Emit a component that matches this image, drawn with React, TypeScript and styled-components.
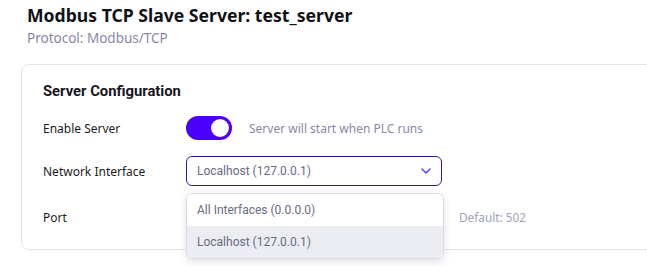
import styled, { createGlobalStyle } from "styled-components";

const GlobalStyle = createGlobalStyle`
  body {
    margin: 0;
    background: #ffffff;
    font-family: "Noto Sans", sans-serif;
  }
`;

const Page = styled.div`
  width: 647px;
  height: 266px;
  overflow: hidden;
  padding: 3px 0 0 27px;
  box-sizing: border-box;
`;

const Title = styled.h1`
  margin: 0;
  font-size: 17.6px;
  font-weight: 700;
  color: #111118;
  line-height: 24px;
`;

const Subtitle = styled.div`
  margin-top: 2px;
  font-size: 13.5px;
  color: #8a87a8;
  line-height: 18px;
`;

const Card = styled.section`
  margin: 17px 0 0 -6px;
  width: 660px;
  height: 186px;
  box-sizing: border-box;
  border: 1px solid #e2e4ea;
  border-radius: 8px;
  padding: 16px 16px 0 21px;
`;

const CardTitle = styled.h2`
  margin: 0;
  font-family: Roboto, sans-serif;
  font-size: 14.8px;
  font-weight: 700;
  color: #16161d;
  line-height: 20px;
`;

const Row = styled.div<{ $h: number }>`
  display: grid;
  grid-template-columns: 143px auto 1fr;
  align-items: center;
  height: ${(p) => p.$h}px;
`;

const Label = styled.span`
  font-size: 12px;
  color: #1c1c24;
`;

const Hint = styled.span`
  font-size: 12px;
  color: #8a87a8;
  margin-left: 17px;
`;

const Toggle = styled.span`
  width: 46px;
  height: 24px;
  border-radius: 12px;
  background: #4a00ff;
  display: flex;
  align-items: center;
  justify-content: flex-end;
  padding: 0 3px;
  box-sizing: border-box;
`;

const Knob = styled.span`
  width: 18px;
  height: 18px;
  border-radius: 50%;
  background: #ffffff;
`;

const SelectWrap = styled.div`
  position: relative;
  width: 256px;
`;

const SelectBox = styled.div`
  height: 30px;
  box-sizing: border-box;
  border: 1.5px solid #2d1b8f;
  border-radius: 6px;
  display: flex;
  align-items: center;
  justify-content: space-between;
  padding: 0 10px;
  font-family: Roboto, sans-serif;
  font-size: 12px;
  color: #6b6b80;
`;

const Menu = styled.ul`
  position: absolute;
  top: 37px;
  left: 0;
  width: 256px;
  margin: 0;
  padding: 0;
  list-style: none;
  background: #ffffff;
  border: 1px solid #d9dbe3;
  border-radius: 6px;
  box-shadow: 0 3px 8px rgba(20, 20, 40, 0.12);
  overflow: hidden;
  z-index: 2;
`;

const Option = styled.li<{ $active?: boolean }>`
  height: 32px;
  display: flex;
  align-items: center;
  padding: 0 10px;
  font-family: Roboto, sans-serif;
  font-size: 12px;
  color: #6b6b80;
  background: ${(p) => (p.$active ? "#ecedf2" : "#ffffff")};
`;

const PortHint = styled.span`
  font-size: 11.8px;
  color: #a0a2b8;
  margin-left: 273px;
`;

export default function App() {
  return (
    <Page>
      <GlobalStyle />
      <Title>Modbus TCP Slave Server: test_server</Title>
      <Subtitle>Protocol: Modbus/TCP</Subtitle>
      <Card>
        <CardTitle>Server Configuration</CardTitle>
        <Row $h={54}>
          <Label>Enable Server</Label>
          <Toggle>
            <Knob />
          </Toggle>
          <Hint>Server will start when PLC runs</Hint>
        </Row>
        <Row $h={32}>
          <Label>Network Interface</Label>
          <SelectWrap>
            <SelectBox>
              Localhost (127.0.0.1)
              <svg width="10" height="6" viewBox="0 0 10 6">
                <path d="M1 1l4 4 4-4" fill="none" stroke="#5b30ff" strokeWidth="1.4" strokeLinecap="round" strokeLinejoin="round" />
              </svg>
            </SelectBox>
            <Menu>
              <Option>All Interfaces (0.0.0.0)</Option>
              <Option $active>Localhost (127.0.0.1)</Option>
            </Menu>
          </SelectWrap>
        </Row>
        <Row $h={60}>
          <Label>Port</Label>
          <span />
          <PortHint>Default: 502</PortHint>
        </Row>
      </Card>
    </Page>
  );
}
